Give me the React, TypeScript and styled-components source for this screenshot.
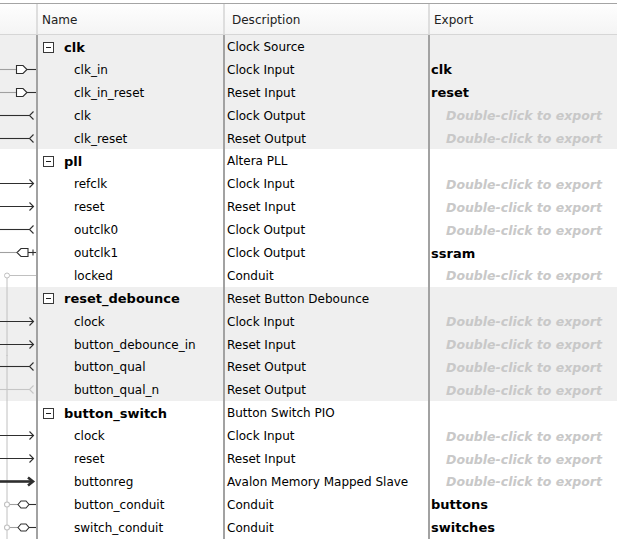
import React from 'react';
import styled, { createGlobalStyle } from 'styled-components';

type Port =
  | 'in'
  | 'inBold'
  | 'out'
  | 'outDim'
  | 'expIn'
  | 'expOut'
  | 'conduit'
  | 'expConduit';

type Child = { name: string; desc: string; port: Port; exp?: string };
type Group = { name: string; desc: string; children: Child[] };

const groups: Group[] = [
  {
    name: 'clk',
    desc: 'Clock Source',
    children: [
      { name: 'clk_in', desc: 'Clock Input', port: 'expIn', exp: 'clk' },
      { name: 'clk_in_reset', desc: 'Reset Input', port: 'expIn', exp: 'reset' },
      { name: 'clk', desc: 'Clock Output', port: 'out' },
      { name: 'clk_reset', desc: 'Reset Output', port: 'out' },
    ],
  },
  {
    name: 'pll',
    desc: 'Altera PLL',
    children: [
      { name: 'refclk', desc: 'Clock Input', port: 'in' },
      { name: 'reset', desc: 'Reset Input', port: 'in' },
      { name: 'outclk0', desc: 'Clock Output', port: 'out' },
      { name: 'outclk1', desc: 'Clock Output', port: 'expOut', exp: 'ssram' },
      { name: 'locked', desc: 'Conduit', port: 'conduit' },
    ],
  },
  {
    name: 'reset_debounce',
    desc: 'Reset Button Debounce',
    children: [
      { name: 'clock', desc: 'Clock Input', port: 'in' },
      { name: 'button_debounce_in', desc: 'Reset Input', port: 'in' },
      { name: 'button_qual', desc: 'Reset Output', port: 'out' },
      { name: 'button_qual_n', desc: 'Reset Output', port: 'outDim' },
    ],
  },
  {
    name: 'button_switch',
    desc: 'Button Switch PIO',
    children: [
      { name: 'clock', desc: 'Clock Input', port: 'in' },
      { name: 'reset', desc: 'Reset Input', port: 'in' },
      { name: 'buttonreg', desc: 'Avalon Memory Mapped Slave', port: 'inBold' },
      { name: 'button_conduit', desc: 'Conduit', port: 'expConduit', exp: 'buttons' },
      { name: 'switch_conduit', desc: 'Conduit', port: 'expConduit', exp: 'switches' },
    ],
  },
];

const DARK = '#2e2e2e';
const WIRE = '#a0a0a0';
const RAIL = '#c0c0c0';

const GlobalStyle = createGlobalStyle`
  html, body {
    margin: 0;
    padding: 0;
    background: #ffffff;
    font-family: "DejaVu Sans", Verdana, sans-serif;
    font-size: 12px;
    color: #000;
  }
`;

const Table = styled.div`
  width: 617px;
  height: 540px;
  overflow: hidden;
  padding-top: 3px;
  box-sizing: border-box;
`;

const Grid = styled.div`
  display: grid;
  grid-template-columns: 36px 187px 205px 1fr;
`;

const HeaderRow = styled(Grid)`
  height: 30px;
  border-top: 1px solid #a4a4a4;
  border-bottom: 1px solid #d6d6d6;
  background: linear-gradient(#fefefe, #f4f4f4);
`;

const HeaderCell = styled.div<{ $pad: number; $first?: boolean }>`
  display: flex;
  align-items: center;
  padding-left: ${(p) => p.$pad}px;
  padding-top: 1px;
  color: #222;
  border-left: ${(p) => (p.$first ? 'none' : '2px solid #dedede')};
`;

const Row = styled(Grid)<{ $shaded: boolean }>`
  height: 22.9px;
  background: ${(p) => (p.$shaded ? '#efefef' : '#ffffff')};
`;

const PortCell = styled.div`
  svg {
    display: block;
    width: 36px;
    height: 100%;
  }
`;

const Cell = styled.div<{ $pad: number }>`
  display: flex;
  align-items: center;
  border-left: 2px solid #a2a2a2;
  padding-left: ${(p) => p.$pad}px;
  padding-top: 1px;
  white-space: nowrap;
  overflow: hidden;
`;

const Toggle = styled.span`
  box-sizing: border-box;
  width: 11px;
  height: 11px;
  margin-left: 5px;
  margin-right: 10px;
  border: 1px solid #383838;
  background: #fff;
  position: relative;
  flex: none;
  &::after {
    content: '';
    position: absolute;
    left: 2px;
    right: 2px;
    top: 4px;
    height: 1px;
    background: #202020;
  }
`;

const GroupName = styled.span`
  font-weight: bold;
  font-size: 13px;
`;

const Exported = styled.span`
  font-weight: bold;
  font-size: 13px;
`;

const Hint = styled.span`
  font-weight: bold;
  font-style: italic;
  font-size: 12.5px;
  color: #c8c8c8;
  padding-left: 15px;
`;

const PortGlyph = ({ port, rail }: { port?: Port; rail: 'none' | 'start' | 'full' }) => {
  const y = 11.5;
  return (
    <svg viewBox="0 0 36 23" preserveAspectRatio="none">
      {rail === 'full' && <line x1={7} y1={0} x2={7} y2={23} stroke={RAIL} strokeWidth={1} />}
      {rail === 'start' && <line x1={7} y1={14} x2={7} y2={23} stroke={RAIL} strokeWidth={1} />}
      {(port === 'in' || port === 'inBold') && (
        <g stroke={DARK} fill="none" strokeWidth={port === 'inBold' ? 2.6 : 1.1}>
          <line x1={0} y1={y} x2={port === 'inBold' ? 32 : 33} y2={y} />
          <polyline
            points={
              port === 'inBold'
                ? `28,${y - 4} 33,${y} 28,${y + 4}`
                : `29.5,${y - 4} 33.5,${y} 29.5,${y + 4}`
            }
          />
        </g>
      )}
      {(port === 'out' || port === 'outDim') && (
        <g stroke={port === 'outDim' ? '#c6c6c6' : DARK} fill="none" strokeWidth={1.1}>
          <line x1={0} y1={y} x2={29} y2={y} />
          <polyline points={`33.5,${y - 4} 29.5,${y} 33.5,${y + 4}`} />
        </g>
      )}
      {port === 'expIn' && (
        <g fill="none" strokeWidth={1.1}>
          <line x1={0} y1={y} x2={16.5} y2={y} stroke={WIRE} />
          <path d={`M16.5 ${y - 4} H23 L27 ${y} L23 ${y + 4} H16.5 Z`} stroke={DARK} fill="#fff" />
          <line x1={27} y1={y} x2={36} y2={y} stroke={DARK} />
        </g>
      )}
      {port === 'expOut' && (
        <g fill="none" strokeWidth={1.1}>
          <line x1={0} y1={y} x2={17} y2={y} stroke={WIRE} />
          <path d={`M28 ${y - 4} H21 L17 ${y} L21 ${y + 4} H28 Z`} stroke={DARK} fill="#fff" />
          <line x1={28} y1={y} x2={36} y2={y} stroke={DARK} />
          <line x1={33} y1={y - 3} x2={33} y2={y + 3} stroke={DARK} />
        </g>
      )}
      {port === 'conduit' && (
        <g fill="#fff" strokeWidth={1} stroke={RAIL}>
          <line x1={9.5} y1={y} x2={36} y2={y} />
          <circle cx={7} cy={y} r={2.5} />
        </g>
      )}
      {port === 'expConduit' && (
        <g fill="#fff" strokeWidth={1.1}>
          <line x1={9.5} y1={y} x2={18} y2={y} stroke={WIRE} />
          <circle cx={7} cy={y} r={2.5} stroke={RAIL} />
          <path d={`M18 ${y} L21 ${y - 3.5} H26 L29 ${y} L26 ${y + 3.5} H21 Z`} stroke={DARK} />
          <line x1={29} y1={y} x2={36} y2={y} stroke={DARK} />
        </g>
      )}
    </svg>
  );
};

export default function App() {
  let railOn = false;
  const rows: React.ReactNode[] = [];

  groups.forEach((g, gi) => {
    const shaded = gi % 2 === 0;
    rows.push(
      <Row key={`g${gi}`} $shaded={shaded}>
        <PortCell>
          <PortGlyph rail={railOn ? 'full' : 'none'} />
        </PortCell>
        <Cell $pad={0}>
          <Toggle />
          <GroupName>{g.name}</GroupName>
        </Cell>
        <Cell $pad={2}>{g.desc}</Cell>
        <Cell $pad={1} />
      </Row>
    );
    g.children.forEach((c, ci) => {
      let rail: 'none' | 'start' | 'full' = railOn ? 'full' : 'none';
      if (c.port === 'conduit' && !railOn) {
        rail = 'start';
        railOn = true;
      }
      rows.push(
        <Row key={`g${gi}c${ci}`} $shaded={shaded}>
          <PortCell>
            <PortGlyph port={c.port} rail={rail} />
          </PortCell>
          <Cell $pad={36}>{c.name}</Cell>
          <Cell $pad={2}>{c.desc}</Cell>
          <Cell $pad={1}>
            {c.exp ? <Exported>{c.exp}</Exported> : <Hint>Double-click to export</Hint>}
          </Cell>
        </Row>
      );
    });
  });

  return (
    <>
      <GlobalStyle />
      <Table>
        <HeaderRow>
          <HeaderCell $pad={0} $first />
          <HeaderCell $pad={4}>Name</HeaderCell>
          <HeaderCell $pad={7}>Description</HeaderCell>
          <HeaderCell $pad={4}>Export</HeaderCell>
        </HeaderRow>
        {rows}
      </Table>
    </>
  );
}
